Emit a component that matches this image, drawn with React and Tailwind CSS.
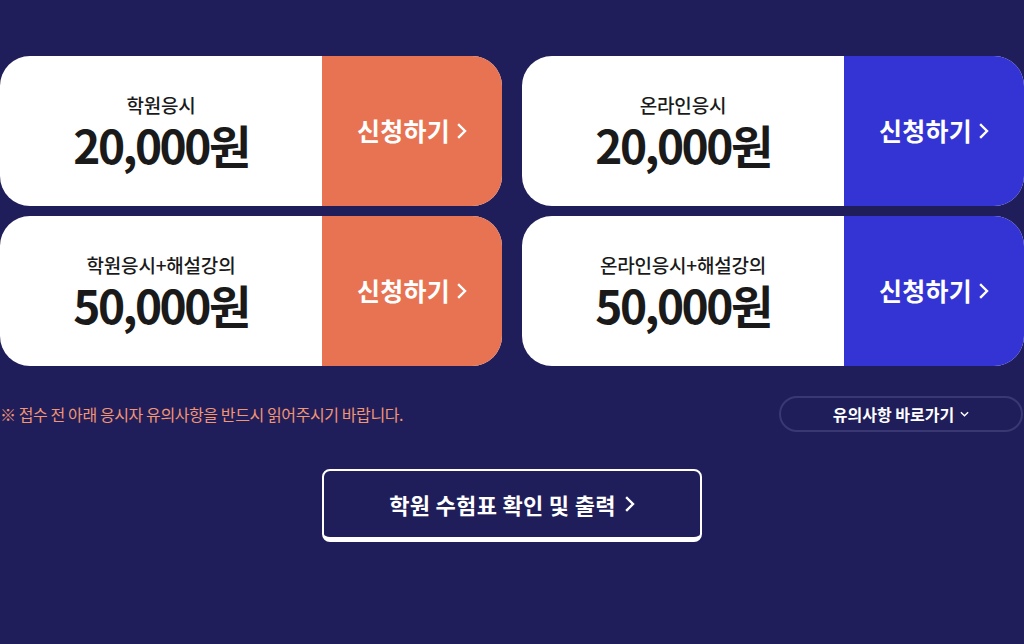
import React from 'react';

const Chevron = ({ className }) => (
  <svg viewBox="0 0 10 16" className={className} fill="none" stroke="currentColor" strokeWidth="2.4" strokeLinecap="square">
    <path d="M2 2l6 6-6 6" />
  </svg>
);

const plans = [
  { label: '학원응시', price: '20,000원', color: 'bg-[#e77352]' },
  { label: '온라인응시', price: '20,000원', color: 'bg-[#3434d4]' },
  { label: '학원응시+해설강의', price: '50,000원', color: 'bg-[#e77352]' },
  { label: '온라인응시+해설강의', price: '50,000원', color: 'bg-[#3434d4]' },
];

const PlanCard = ({ label, price, color }) => (
  <div className="flex h-[150px] overflow-hidden rounded-[30px] bg-white">
    <div className="flex w-[322px] flex-col items-center justify-center text-[#1a1a1a]">
      <p className="text-[19px] font-medium leading-[20px] tracking-[-0.2px]">{label}</p>
      <p className="mt-[6px] text-[46px] font-bold leading-[46px] tracking-[-2.5px]">{price}</p>
    </div>
    <button className={`flex flex-1 items-center justify-center gap-[7px] text-[25px] font-bold tracking-[0.3px] text-white ${color}`}>
      신청하기
      <Chevron className="h-[16px] w-[10px]" />
    </button>
  </div>
);

export default function App() {
  return (
    <div
      className="h-[644px] w-[1024px] bg-[#201e5a] pt-[56px]"
      style={{ fontFamily: '"Noto Sans CJK KR", "Noto Sans", sans-serif' }}
    >
      <div className="grid grid-cols-2 gap-x-[20px] gap-y-[10px]">
        {plans.map((p, i) => (
          <PlanCard key={i} {...p} />
        ))}
      </div>

      <div className="mt-[30px] flex items-center justify-between">
        <p className="text-[16px] tracking-[-0.4px] text-[#f29574]">※ 접수 전 아래 응시자 유의사항을 반드시 읽어주시기 바랍니다.</p>
        <button className="mr-[1px] flex h-[36px] w-[244px] items-center justify-center gap-[6px] rounded-full border-2 border-[#3a3872] text-[16px] font-bold text-white">
          유의사항 바로가기
          <svg viewBox="0 0 10 6" className="h-[6px] w-[9px]" fill="none" stroke="currentColor" strokeWidth="1.6">
            <path d="M1 1l4 4 4-4" />
          </svg>
        </button>
      </div>

      <div className="mt-[37px] flex justify-center">
        <button className="flex h-[73px] w-[380px] items-center justify-center gap-[9px] rounded-[8px] border-2 border-b-[5px] border-white text-[22px] font-bold tracking-[0.3px] text-white">
          학원 수험표 확인 및 출력
          <Chevron className="h-[16px] w-[10px]" />
        </button>
      </div>
    </div>
  );
}
